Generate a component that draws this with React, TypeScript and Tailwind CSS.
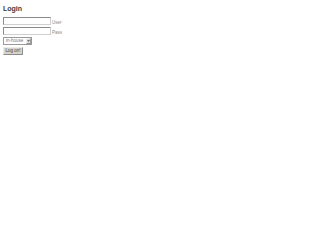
export default function App() {
  return (
    <div className="min-h-screen bg-white px-[3px] pt-[5px] font-['Liberation_Sans',Arial,sans-serif] text-[#333]">
      <h1 className="text-[7px] font-bold leading-[7px] text-[#3a3a3a]">Login</h1>

      <div className="mt-[5px] flex flex-col items-start">
        <div className="flex items-end gap-[1px]">
          <input
            type="text"
            className="h-[8px] w-[48px] border border-t-[#8a8a8a] border-l-[#8a8a8a] border-b-[#d0d0d0] border-r-[#d0d0d0] bg-white outline-none"
          />
          <span className="text-[4.5px] leading-[5px] text-[#888]">User</span>
        </div>
        <div className="mt-[2px] flex items-end gap-[1px]">
          <input
            type="password"
            className="h-[8px] w-[48px] border border-t-[#8a8a8a] border-l-[#8a8a8a] border-b-[#d0d0d0] border-r-[#d0d0d0] bg-white outline-none"
          />
          <span className="text-[4.5px] leading-[5px] text-[#888]">Pass</span>
        </div>

        <div className="mt-[2px] flex h-[8px] w-[29px] border border-[#9a9a9a] bg-white">
          <span className="flex-1 pl-[2px] text-[4.5px] leading-[6px] text-[#777]">in-house</span>
          <span className="flex w-[5px] items-center justify-center border border-t-[#f4f2ee] border-l-[#f4f2ee] border-b-[#999] border-r-[#999] bg-[#e0ddd6]">
            <svg width="3" height="2" viewBox="0 0 3 2">
              <path d="M0 0h3L1.5 2z" fill="#777" />
            </svg>
          </span>
        </div>

        <button className="mt-[1.5px] h-[8px] w-[20px] border border-t-[#eeece6] border-l-[#eeece6] border-b-[#8c8c8c] border-r-[#8c8c8c] bg-[#d6d3cc] text-[4.5px] leading-[6px] text-[#444]">
          Log on!
        </button>
      </div>
    </div>
  );
}
